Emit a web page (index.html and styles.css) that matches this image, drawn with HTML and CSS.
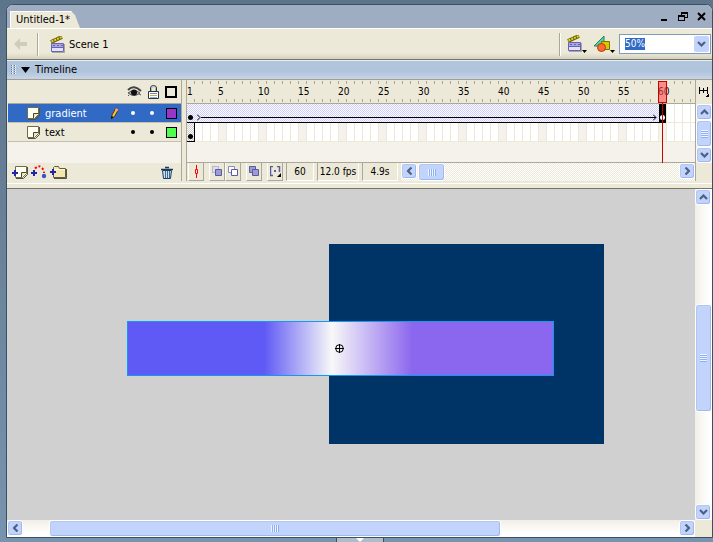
FILE: index.html
```html
<!DOCTYPE html>
<html lang="en">
<head>
  <meta charset="UTF-8">
  <meta name="viewport" content="width=device-width, initial-scale=1.0">
  <title>Untitled-1</title>
  <link rel="stylesheet" href="styles.css">
</head>
<body>

<svg class="defs" aria-hidden="true">
  <symbol id="i-chevron" viewBox="0 0 9 6"><path d="M1 1 L4.500 4.500 L8 1" fill="none" stroke="#4d6185" stroke-width="2.200"/></symbol>
  <symbol id="i-clap" viewBox="0 0 15 17">
    <path d="M1 6 L12 1" stroke="#6b6400" stroke-width="4"/>
    <path d="M1.500 5.500 L12 1" stroke="#e0d030" stroke-width="2" stroke-dasharray="2 1"/>
    <path d="M1.500 7.500h12v8h-12z" fill="#e4e2fa" stroke="#6862b8"/>
    <path d="M2 8h11v3H2z" fill="#a9a6dc"/>
    <path d="M2 11.500h11M3 9.500h2M7 9.500h2M11 9.500h2" stroke="#6862b8"/>
    <path d="M2 16.500h13M14.500 8v8" stroke="#aaa796"/>
  </symbol>
  <symbol id="i-page" viewBox="0 0 13 13">
    <path d="M1 12.500h7.500l4-4V1" fill="none" stroke="#55523c"/>
    <path d="M.5 .5h11v7l-4 4h-7z" fill="#fffff0" stroke="#6f6b4c"/>
    <path d="M11 6.500H6.500V11" fill="#e6e3b8" stroke="#4a472f"/>
  </symbol>
  <symbol id="i-plus" viewBox="0 0 6 6"><path d="M3 0v6M0 3h6" stroke="#2424a8" stroke-width="2"/></symbol>
</svg>

<div class="window">
  <header class="titlebar">
    <div class="tab">Untitled-1*</div>
    <div class="window-buttons">
      <button aria-label="Minimize"><svg width="9" height="9"><path d="M1 8h6" stroke="#000" stroke-width="2"/></svg></button>
      <button aria-label="Restore"><svg width="10" height="9" shape-rendering="crispEdges"><path d="M3 0h7v6H7V5h2V2H4v1H3zM0 3h7v6H0zM1 5v3h5V5z" fill-rule="evenodd"/></svg></button>
      <button aria-label="Close"><svg width="9" height="9"><path d="M1 1l7 7M8 1l-7 7" stroke="#000" stroke-width="2"/></svg></button>
    </div>
  </header>

  <nav class="editbar">
    <button class="back" aria-label="Back" disabled><svg width="14" height="12"><path d="M0 6l6-6v4h7v4H6v4z" fill="#d0ccba"/></svg></button>
    <span class="divider"></span>
    <a class="scene" href="#scene"><svg width="15" height="17"><use href="#i-clap"/></svg><span class="scene-name">Scene 1</span></a>
    <div class="edit-tools">
      <span class="divider"></span>
      <button class="tool" aria-label="Edit scene"><svg width="20" height="19"><use href="#i-clap" width="15" height="17"/><path d="M15 15h5l-2.500 3z"/></svg></button>
      <button class="tool" aria-label="Edit symbols"><svg width="22" height="19">
        <path d="M1 11L11 1v10z" fill="#4fd6a0" stroke="#25805c"/>
        <path d="M8.500 6.500h8v8h-8z" fill="#d5c900" stroke="#7a7300"/>
        <circle cx="8.500" cy="12.500" r="4" fill="#ff6a33" stroke="#b23a10"/>
        <path d="M17 15h5l-2.500 3z"/></svg></button>
      <div class="zoom">
        <select id="zoom" aria-label="Zoom"><option>50%</option><option>100%</option><option>200%</option></select>
        <span class="zoom-arrow"><svg width="9" height="6"><use href="#i-chevron"/></svg></span>
      </div>
    </div>
  </nav>

  <h2 class="panel-title"><span class="gripper"></span><svg width="9" height="6"><path d="M0 0h9L4.500 6z"/></svg>Timeline</h2>

  <section class="timeline">
    <div class="layers">
      <div class="layers-head">
        <svg width="15" height="12"><path d="M1 4q6-6 13 1" fill="none" stroke="#444" stroke-width="2"/><path d="M1 7q6-5 12 0-6 5-12 0z" fill="#b5b2a6" stroke="#555"/><circle cx="7" cy="6.500" r="3" fill="#111"/><path d="M2 9l-1 1M12 8l2 1" stroke="#555"/></svg>
        <svg width="11" height="14"><path d="M2.500 7V3q0-2.500 3-2.500T8.500 3v4" fill="none" stroke="#333" stroke-width="1"/><path d="M3.500 6V3.500Q3.500 1.500 5.500 1.500T7.500 3.500V6" fill="none" stroke="#a8b4c4"/><path d="M.5 6.500h10v7H.5z" fill="#fff" stroke="#333"/><path d="M2 8.500h7" stroke="#5f8fd0"/><path d="M2 10.500h7" stroke="#d0a948"/><path d="M2 12.500h7" stroke="#8ab0dc"/></svg>
        <span class="swatch outline"></span>
      </div>
      <ul class="layer-list">
        <li class="layer selected">
          <svg width="13" height="13"><use href="#i-page"/></svg><span class="layer-name">gradient</span>
          <svg class="pencil" width="9" height="13"><path d="M1.500 11.500L2 8 6 1l2.500 1.500-4 7z" fill="#f5c53a" stroke="#5c3414"/><path d="M6 1l2.500 1.500-1 1.700L5 2.800z" fill="#e8a0a0"/><path d="M1 12l.5-3 2 1z"/></svg>
          <span class="dot"></span><span class="dot"></span><span class="swatch purple"></span>
        </li>
        <li class="layer">
          <svg width="13" height="13"><use href="#i-page"/></svg><span class="layer-name">text</span>
          <span class="dot"></span><span class="dot"></span><span class="swatch green"></span>
        </li>
      </ul>
      <div class="layers-foot">
        <button aria-label="Insert layer"><svg width="16" height="13"><use href="#i-page" x="3" width="13" height="13"/><use href="#i-plus" y="4" width="6" height="6"/></svg></button>
        <button aria-label="Add motion guide"><svg width="16" height="14"><path d="M4 3.500Q8-.5 11 3q2 2 2 5" fill="none" stroke="#f00" stroke-width="2" stroke-dasharray="2 2"/><circle cx="13" cy="11" r="2.200" fill="#3158d0"/><use href="#i-plus" y="5" width="6" height="6"/></svg></button>
        <button aria-label="Insert layer folder"><svg width="17" height="14"><path d="M3.500 12.500v-10l1-1h4l1 2h6v9z" fill="#f3e6b0" stroke="#655d3c"/><path d="M4 4.500h11" stroke="#fffbe0"/><path d="M4 13.500h12.500V4" fill="none" stroke="#55523c"/><use href="#i-plus" y="4" width="6" height="6"/></svg></button>
        <button class="trash" aria-label="Delete layer"><svg width="12" height="13"><path d="M4 1.500h4M0 3.500h12" stroke="#1d3c5a" stroke-width="1.500"/><path d="M1.500 4.500h9l-1 8h-7z" fill="#c9e2f5" stroke="#1d3c5a"/><path d="M4.500 5v7M6.500 5v7M8.500 5v7" stroke="#3e6b93"/></svg></button>
      </div>
    </div>

    <div class="frames">
      <div class="ruler">
        <span>1</span><span>5</span><span>10</span><span>15</span><span>20</span><span>25</span><span>30</span><span>35</span><span>40</span><span>45</span><span>50</span><span>55</span><span>60</span>
      </div>
      <div class="track-row">
        <div class="tween"><i class="key"></i><svg class="tip" width="4" height="7"><path d="M0 .5L3 3.500 0 6.500" fill="none" stroke="#000"/></svg><span class="shaft"></span><svg class="tip" width="4" height="7"><path d="M0 .5L3 3.500 0 6.500" fill="none" stroke="#000"/></svg></div>
        <div class="end-frame"><i class="key"></i></div>
      </div>
      <div class="track-row">
        <div class="single-frame"><i class="key"></i></div>
      </div>
      <div class="playhead"></div>
      <div class="frames-foot">
        <div class="frame-tools">
          <button class="small" aria-label="Center frame"><svg width="5" height="13"><path d="M2.500 0v13" stroke="#f00"/><path d="M1.500 4.500h2v4h-2z" fill="#f6f3e6" stroke="#f00"/></svg></button>
          <div class="pair">
            <button class="small" aria-label="Onion skin"><svg width="11" height="11"><path d="M.5 .5h6v6h-6z" fill="#dedeee" stroke="#8c8cc0" stroke-dasharray="1 1"/><path d="M3.500 3.500h6v6h-6z" fill="#9c9cd2" stroke="#5a5a9c"/></svg></button>
            <button class="small" aria-label="Onion skin outlines"><svg width="11" height="11"><path d="M.5 .5h6v6h-6z" fill="#fff" stroke="#8c8cc0"/><path d="M3.500 3.500h6v6h-6z" fill="#fff" stroke="#5a5a9c"/></svg></button>
          </div>
          <button class="small" aria-label="Edit multiple frames"><svg width="11" height="11"><path d="M.5 .5h6v6h-6z" fill="#9c9cd2" stroke="#5a5a9c"/><path d="M3.500 3.500h6v6h-6z" fill="#9c9cd2" stroke="#5a5a9c"/></svg></button>
          <button class="small" aria-label="Modify onion markers"><svg width="11" height="11"><path d="M3 .5H.5v9H3M7 .5h2.500V6" fill="none" stroke="#5a5a9c" stroke-width="1.500"/><path d="M4 4h2v2H4z" fill="#5a5a9c"/><path d="M7 11h4V7z"/></svg></button>
        </div>
        <output class="field">60</output>
        <output class="field fps">12.0 fps</output>
        <output class="field time">4.9s</output>
        <div class="scroll horizontal dither">
          <button class="arrow left" aria-label="Scroll left"><svg width="9" height="6"><use href="#i-chevron"/></svg></button>
          <div class="scroll-track" style="grid-template-columns: 1fr 27fr 232fr"><span class="thumb"></span></div>
          <button class="arrow right" aria-label="Scroll right"><svg width="9" height="6"><use href="#i-chevron"/></svg></button>
        </div>
      </div>
    </div>

    <div class="timeline-side">
      <button class="frame-view" aria-label="Frame view"><svg width="10" height="11" shape-rendering="crispEdges"><path d="M.5 0v7M4.500 1v5M8.500 0v7M0 3.500h9" stroke="#000"/><path d="M6 10h4V7z"/></svg></button>
      <div class="scroll vertical">
        <button class="arrow up" aria-label="Scroll up"><svg width="9" height="6"><use href="#i-chevron"/></svg></button>
        <div class="scroll-track" style="grid-template-rows: 0fr 24fr 0fr"><span class="thumb"></span></div>
        <button class="arrow" aria-label="Scroll down"><svg width="9" height="6"><use href="#i-chevron"/></svg></button>
      </div>
    </div>
  </section>

  <main class="work">
    <div class="canvas">
      <div class="stage"></div>
      <div class="shape"></div>
      <svg class="center-mark" width="9" height="9"><circle cx="4.500" cy="4.500" r="3.800" fill="none" stroke="#000"/><path d="M4.500 0v9M0 4.500h9" stroke="#000"/></svg>
    </div>
    <div class="scroll vertical">
      <button class="arrow up" aria-label="Scroll up"><svg width="9" height="6"><use href="#i-chevron"/></svg></button>
      <div class="scroll-track" style="grid-template-rows: 99fr 107fr 92fr"><span class="thumb"></span></div>
      <button class="arrow" aria-label="Scroll down"><svg width="9" height="6"><use href="#i-chevron"/></svg></button>
    </div>
    <div class="scroll horizontal">
      <button class="arrow left" aria-label="Scroll left"><svg width="9" height="6"><use href="#i-chevron"/></svg></button>
      <div class="scroll-track" style="grid-template-columns: 26fr 451fr 178fr"><span class="thumb"></span></div>
      <button class="arrow right" aria-label="Scroll right"><svg width="9" height="6"><use href="#i-chevron"/></svg></button>
    </div>
  </main>
</div>

<button class="drawer" aria-label="Open panel"><svg width="8" height="4"><path d="M0 0h8L4 4z" fill="#fff"/></svg></button>

</body>
</html>
```
FILE: styles.css
```css
* { box-sizing: border-box; margin: 0; padding: 0; }

body {
  display: flex;
  flex-direction: column;
  height: 100vh;
  padding: 4px 0 0 6px;
  overflow: hidden;
  background: linear-gradient(#5d758b, #7893ad);
  color: #000;
  font: 11px/14px "DejaVu Sans Condensed", "Liberation Sans", sans-serif;
}

button {
  display: flex;
  align-items: center;
  justify-content: center;
  border: none;
  background: none;
  color: inherit;
}

svg { display: block; flex: none; }
.defs { position: absolute; width: 0; height: 0; }

.window {
  display: flex;
  flex-direction: column;
  flex: 1;
  min-height: 0;
  border: 1px solid #3c5063;
  border-radius: 7px 7px 0 0;
  background: #ece9d8;
  overflow: hidden;
}

/* title bar */
.titlebar {
  display: flex;
  align-items: flex-end;
  justify-content: space-between;
  height: 24px;
  padding-left: 3px;
  background: #9eadc1;
  border-bottom: 1px solid #fff;
}

.tab {
  height: 17px;
  width: 70px;
  padding: 1px 0 0 5px;
  background: #ece9d8;
  border-top: 1px solid #fff;
  border-left: 1px solid #fff;
  clip-path: polygon(0 0, 61px 0, 65px 4px, 70px 100%, 0 100%);
  white-space: nowrap;
}

.window-buttons {
  display: flex;
  gap: 9px;
  padding: 0 6px 7px 0;
}

/* edit bar */
.editbar {
  display: flex;
  align-items: center;
  height: 31px;
  padding-left: 7px;
  background: linear-gradient(#ece9d8 80%, #d5d1bf);
  border-bottom: 1px solid #77756a;
}

.divider {
  width: 2px;
  height: 23px;
  border-left: 1px solid #aca899;
  border-right: 1px solid #fff;
}

.back { margin-right: 9px; }

.scene {
  display: flex;
  align-items: center;
  gap: 4px;
  margin-left: 11px;
  color: #000;
  text-decoration: none;
}

.scene-name { padding-top: 2px; }

.edit-tools {
  display: flex;
  align-items: center;
  gap: 6px;
  margin-left: auto;
  padding-right: 1px;
}

.zoom {
  display: flex;
  position: relative;
  width: 92px;
  height: 20px;
  margin-left: -2px;
}

.zoom select {
  appearance: none;
  width: 100%;
  padding-left: 5px;
  border: 1px solid #7f9db9;
  background: linear-gradient(#316ac5, #316ac5) 5px 3px / 20px 12px no-repeat #fff;
  color: #fff;
  font: inherit;
  font-size: 10px;
}

.zoom select option { color: #000; background: #fff; }

.zoom-arrow {
  display: flex;
  align-items: center;
  justify-content: center;
  position: absolute;
  top: 2px;
  right: 2px;
  width: 15px;
  height: 16px;
  background: #c2d3fc;
  border-radius: 2px;
  pointer-events: none;
}

/* panel title */
.panel-title {
  display: flex;
  align-items: center;
  gap: 5px;
  height: 20px;
  padding-left: 4px;
  background: linear-gradient(#b2c6dd, #afc3da 55%, #c8d5e6);
  border-top: 1px solid #e7eef6;
  border-bottom: 1px solid #9f9d94;
  font-size: 11px;
  font-weight: normal;
}

.gripper {
  width: 5px;
  height: 10px;
  background:
    repeating-linear-gradient(transparent 0 1px, #b2c6dd 1px 2px),
    repeating-linear-gradient(90deg, #60799a 0 1px, #fff 1px 2px, #b2c6dd 2px 3px);
}

/* timeline */
.timeline {
  display: grid;
  grid-template-columns: 175px 1fr 17px;
  height: 109px;
  padding-bottom: 7px;
  border-bottom: 1px solid #77756a;
  background: linear-gradient(#fff, #fff) 0 103px / 100% 1px no-repeat #ece9d8;
}

.layers {
  display: flex;
  flex-direction: column;
  border-right: 1px solid #aca899;
  padding-left: 1px;
}

.layers-head {
  display: flex;
  align-items: center;
  justify-content: flex-end;
  gap: 6px;
  height: 24px;
  padding-right: 4px;
  border-bottom: 1px solid #aca899;
}

.layer-list {
  flex: 1;
  list-style: none;
  background: #f5f2ec;
}

.layer {
  display: flex;
  align-items: center;
  height: 19px;
  padding: 0 4px 0 19px;
  border-bottom: 1px solid #c4c0b0;
  background: #ece9d8;
}

.layer-name { flex: 1; margin-left: 5px; padding-top: 2px; }
.selected { background: #316ac5; color: #fff; }
.pencil { margin-right: 12px; }

.dot {
  width: 4px;
  height: 4px;
  margin-right: 15px;
  border-radius: 50%;
  background: currentColor;
}

.dot + .dot { margin-right: 12px; }

.swatch {
  width: 11px;
  height: 11px;
  border: 1px solid #000;
}

.outline { width: 12px; height: 12px; border-width: 2px; }
.purple { background: #9933cc; }
.green { background: #4fff4f; }

.layers-foot {
  display: flex;
  align-items: center;
  gap: 3px;
  height: 18px;
  padding: 0 8px 0 4px;
}

.trash { margin-left: auto; }

.frames {
  display: flex;
  flex-direction: column;
  position: relative;
  min-width: 0;
  margin-left: 4px;
  border-left: 1px solid #aca899;
  background: #f5f2ec;
}

.ruler {
  display: flex;
  height: 24px;
  padding-top: 5px;
  border-bottom: 1px solid #aca899;
  background:
    repeating-linear-gradient(90deg, transparent 0 7px, #aca899 7px 8px) 0 1px / 100% 3px no-repeat,
    repeating-linear-gradient(90deg, transparent 0 7px, #aca899 7px 8px) 0 19px / 100% 3px no-repeat,
    #ece9d8;
  overflow: hidden;
  font-size: 10px;
}

.ruler span { flex: none; width: 40px; }
.ruler span:first-child { width: 31px; }

.track-row {
  display: flex;
  height: 19px;
  border-bottom: 1px solid #ece9d8;
  background:
    repeating-linear-gradient(90deg, transparent 0 7px, #ece9d8 7px 8px),
    repeating-linear-gradient(90deg, #fff 0 32px, #f5f2ec 32px 40px);
}

.key {
  width: 5px;
  height: 5px;
  margin-left: 1px;
  border-radius: 50%;
  background: #000;
}

.tween {
  display: flex;
  align-items: center;
  width: 472px;
  height: 19px;
  padding: 9px 2px 0 0;
  border-bottom: 1px solid #000;
  background: repeating-conic-gradient(#ccccff 0 25%, #fff 0 50%) 0 0 / 2px 2px;
}

.tip { margin-left: 4px; }
.shaft { flex: 1; height: 1px; margin-right: -7px; background: #000; }

.end-frame {
  width: 7px;
  height: 19px;
  padding-top: 11px;
  background: #000;
}

.end-frame .key { display: block; background: #fff; }

.single-frame {
  width: 8px;
  height: 19px;
  padding-top: 11px;
  border-right: 1px solid #000;
  border-bottom: 1px solid #000;
  background: repeating-conic-gradient(#ccc 0 25%, #fff 0 50%) 0 0 / 2px 2px;
}

.single-frame .key { display: block; }

/* marker over the current frame */
.playhead {
  position: absolute;
  top: 1px;
  left: 471px;
  width: 9px;
  height: 22px;
  border: 1px solid #c00;
  background: rgba(255, 80, 80, 0.6);
}

.playhead::after {
  content: "";
  position: absolute;
  top: 21px;
  left: 3px;
  width: 1px;
  height: 60px;
  background: #c00;
}

.frames-foot {
  display: flex;
  gap: 3px;
  height: 19px;
  margin-top: auto;
  padding-left: 1px;
  border-top: 1px solid #aca899;
  background: #ece9d8;
}

.frame-tools { display: flex; gap: 5px; }
.pair { display: flex; }

.small {
  width: 16px;
  border-right: 1px solid #aca899;
  border-bottom: 1px solid #aca899;
  border-left: 1px solid #fff;
}

.field {
  width: 28px;
  padding-top: 2px;
  border-left: 1px solid #aca899;
  border-right: 1px solid #fff;
  border-bottom: 1px solid #fff;
  text-align: center;
  white-space: nowrap;
  font-size: 10px;
}

.fps { width: 42px; }
.time { width: 36px; }
.frames-foot .scroll { flex: 1; }

.timeline-side {
  display: flex;
  flex-direction: column;
  border-left: 1px solid #aca899;
}

.frame-view { height: 24px; }
.timeline-side .scroll { height: 59px; }

/* scroll bars */
.scroll { display: flex; background: #f8f7f2; }
.vertical { flex-direction: column; background: linear-gradient(90deg, #f1efe6, #fff 80%); }
.horizontal { background: linear-gradient(#f1efe6, #fff 80%); }
.dither { background: repeating-conic-gradient(#ece9d8 0 25%, #fff 0 50%) 0 0 / 2px 2px; }

.arrow, .thumb {
  border: 1px solid #fff;
  border-radius: 3px;
  background: #c2d3fc;
  box-shadow: inset -1px -1px #9db9ee, inset 1px 1px #b3c6f2;
}

.arrow { flex: none; width: 16px; height: 16px; }
.up svg { transform: rotate(180deg); }
.left svg { transform: rotate(90deg); }
.right svg { transform: rotate(-90deg); }

.scroll-track { display: grid; flex: 1; min-height: 0; }

.thumb {
  display: flex;
  align-items: center;
  justify-content: center;
}

.thumb::after { content: ""; }

.vertical .thumb { grid-row: 2; }
.vertical .thumb::after {
  width: 7px;
  height: 8px;
  background: repeating-linear-gradient(#eef4fe 0 1px, #8cb0f8 1px 2px);
}

.horizontal .thumb { grid-column: 2; }
.horizontal .thumb::after {
  width: 8px;
  height: 7px;
  background: repeating-linear-gradient(90deg, #eef4fe 0 1px, #8cb0f8 1px 2px);
}

/* work area */
.work {
  display: grid;
  grid-template-columns: 1fr 17px;
  grid-template-rows: 1fr 17px;
  flex: 1;
  min-height: 0;
}

.canvas {
  position: relative;
  background: #d0d0d0;
  overflow: hidden;
}

.stage {
  position: absolute;
  top: 55px;
  left: 322px;
  width: 275px;
  height: 200px;
  background: #003366;
}

.shape {
  position: absolute;
  top: 132px;
  left: 120px;
  width: 427px;
  height: 55px;
  border: 1px solid #0f9bf5;
  background: linear-gradient(90deg, #5f59f5 32%, #f8f8f8 48%, #8b66ee 67%);
}

.center-mark {
  position: absolute;
  top: 155px;
  left: 328px;
}

.drawer {
  align-self: center;
  width: 48px;
  height: 4px;
  background: #aebdcc;
  border: solid #3c5063;
  border-width: 0 1px;
}
```
